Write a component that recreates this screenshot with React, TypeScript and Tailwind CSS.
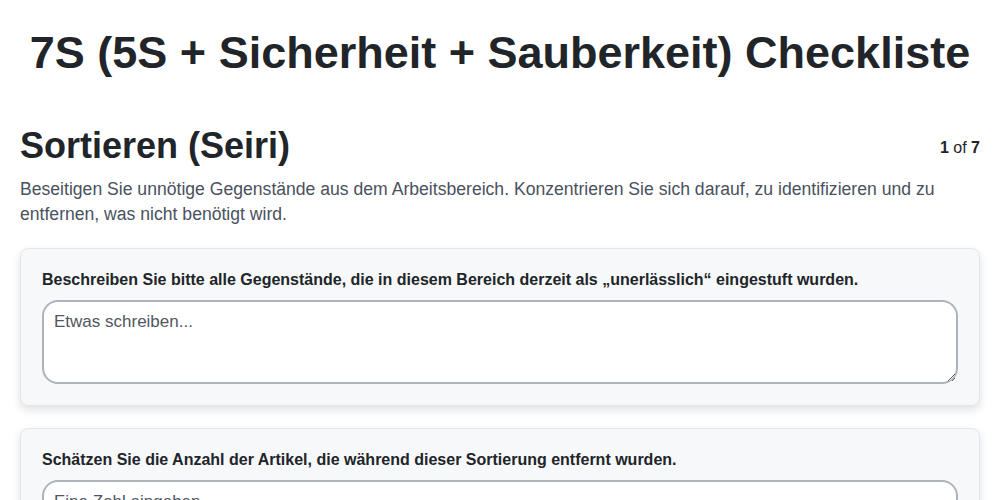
import React from 'react';

interface Question {
  id: string;
  label: string;
  kind: 'text' | 'number';
  placeholder: string;
}

const questions: Question[] = [
  {
    id: 'q1',
    label: 'Beschreiben Sie bitte alle Gegenstände, die in diesem Bereich derzeit als „unerlässlich“ eingestuft wurden.',
    kind: 'text',
    placeholder: 'Etwas schreiben...',
  },
  {
    id: 'q2',
    label: 'Schätzen Sie die Anzahl der Artikel, die während dieser Sortierung entfernt wurden.',
    kind: 'number',
    placeholder: 'Eine Zahl eingeben',
  },
];

const QuestionCard: React.FC<{ q: Question }> = ({ q }) => (
  <div className="bg-[#f7f8fa] border border-[#e3e6ea] rounded-lg px-[21px] pt-[21px] pb-[21px] shadow-[0_4px_10px_rgba(0,0,0,0.12)]">
    <label htmlFor={q.id} className="block text-[16px] font-bold text-[#212529] leading-[20px] mb-[10px]">
      {q.label}
    </label>
    {q.kind === 'text' ? (
      <textarea
        id={q.id}
        placeholder={q.placeholder}
        className="block w-full h-[84px] bg-white border-2 border-[#adb3ba] rounded-2xl px-[10px] py-[8px] text-[17px] leading-[24px] text-[#212529] placeholder:text-[#505761] outline-none"
      />
    ) : (
      <input
        id={q.id}
        type="number"
        placeholder={q.placeholder}
        className="block w-full h-[44px] bg-white border-2 border-[#adb3ba] rounded-2xl px-[10px] py-[8px] text-[17px] leading-[24px] text-[#212529] placeholder:text-[#505761] outline-none"
      />
    )}
  </div>
);

export default function App() {
  return (
    <div className="min-h-screen bg-white text-[#212529] font-['Liberation_Sans',Arial,sans-serif]">
      <div className="max-w-[1000px] mx-auto px-5">
        <h1 className="text-center text-[45px] font-bold leading-[52px] pt-[27px] pb-[22px]">
          7S (5S + Sicherheit + Sauberkeit) Checkliste
        </h1>
        <div className="flex items-start justify-between pt-[23px]">
          <h2 className="text-[36px] font-bold leading-[44px]">Sortieren (Seiri)</h2>
          <div className="text-[16px] pt-[12px]">
            <span className="font-bold">1</span> of <span className="font-bold">7</span>
          </div>
        </div>
        <p className="text-[17.6px] leading-[25px] text-[#495160] mt-[9px] pr-[10px]">
          Beseitigen Sie unnötige Gegenstände aus dem Arbeitsbereich. Konzentrieren Sie sich darauf, zu identifizieren und zu entfernen, was nicht benötigt wird.
        </p>
        <div className="flex flex-col gap-[22px] mt-[21px]">
          {questions.map((q) => (
            <QuestionCard key={q.id} q={q} />
          ))}
        </div>
      </div>
    </div>
  );
}
